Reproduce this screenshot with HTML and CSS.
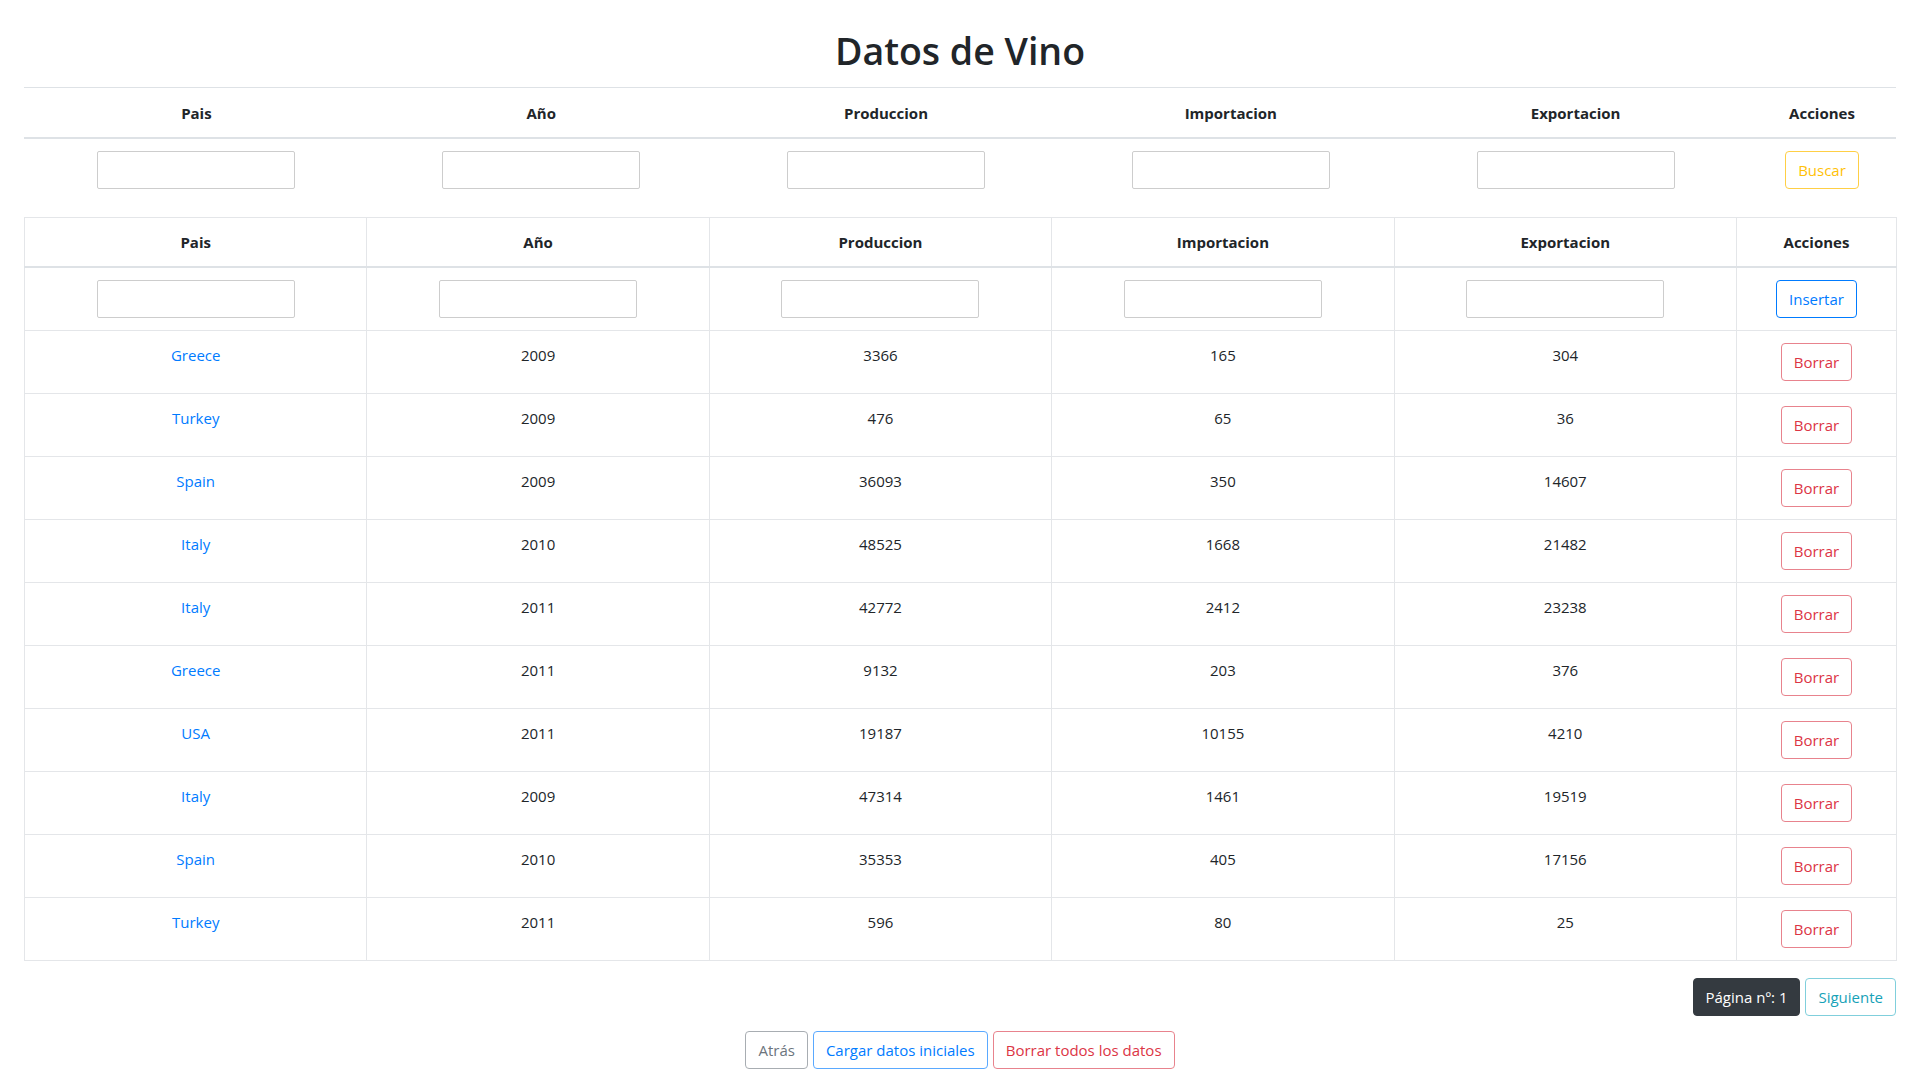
FILE: index.html
```html
<!DOCTYPE html>
<html lang="es">
<head>
<meta charset="utf-8">
<title>Datos de Vino</title>
<link rel="stylesheet" href="styles.css">
</head>
<body>
<div class="page">
  <h1 class="title">Datos de Vino</h1>

  <table class="table table-search">
    <colgroup>
      <col class="c-main"><col class="c-main"><col class="c-main"><col class="c-main"><col class="c-main"><col class="c-act-search">
    </colgroup>
    <thead>
      <tr><th>Pais</th><th>Año</th><th>Produccion</th><th>Importacion</th><th>Exportacion</th><th>Acciones</th></tr>
    </thead>
    <tbody>
      <tr>
        <td><input class="field" type="text"></td>
        <td><input class="field" type="text"></td>
        <td><input class="field" type="text"></td>
        <td><input class="field" type="text"></td>
        <td><input class="field" type="text"></td>
        <td><button class="btn btn-warning-o">Buscar</button></td>
      </tr>
    </tbody>
  </table>

  <table class="table table-bordered">
    <colgroup>
      <col class="c-data"><col class="c-data"><col class="c-data"><col class="c-data"><col class="c-data"><col class="c-act">
    </colgroup>
    <thead>
      <tr><th>Pais</th><th>Año</th><th>Produccion</th><th>Importacion</th><th>Exportacion</th><th>Acciones</th></tr>
    </thead>
    <tbody>
      <tr>
        <td><input class="field" type="text"></td>
        <td><input class="field" type="text"></td>
        <td><input class="field" type="text"></td>
        <td><input class="field" type="text"></td>
        <td><input class="field" type="text"></td>
        <td><button class="btn btn-primary-o">Insertar</button></td>
      </tr>
      <tr><td><a class="link" href="#">Greece</a></td><td>2009</td><td>3366</td><td>165</td><td>304</td><td><button class="btn btn-danger-o">Borrar</button></td></tr>
      <tr><td><a class="link" href="#">Turkey</a></td><td>2009</td><td>476</td><td>65</td><td>36</td><td><button class="btn btn-danger-o">Borrar</button></td></tr>
      <tr><td><a class="link" href="#">Spain</a></td><td>2009</td><td>36093</td><td>350</td><td>14607</td><td><button class="btn btn-danger-o">Borrar</button></td></tr>
      <tr><td><a class="link" href="#">Italy</a></td><td>2010</td><td>48525</td><td>1668</td><td>21482</td><td><button class="btn btn-danger-o">Borrar</button></td></tr>
      <tr><td><a class="link" href="#">Italy</a></td><td>2011</td><td>42772</td><td>2412</td><td>23238</td><td><button class="btn btn-danger-o">Borrar</button></td></tr>
      <tr><td><a class="link" href="#">Greece</a></td><td>2011</td><td>9132</td><td>203</td><td>376</td><td><button class="btn btn-danger-o">Borrar</button></td></tr>
      <tr><td><a class="link" href="#">USA</a></td><td>2011</td><td>19187</td><td>10155</td><td>4210</td><td><button class="btn btn-danger-o">Borrar</button></td></tr>
      <tr><td><a class="link" href="#">Italy</a></td><td>2009</td><td>47314</td><td>1461</td><td>19519</td><td><button class="btn btn-danger-o">Borrar</button></td></tr>
      <tr><td><a class="link" href="#">Spain</a></td><td>2010</td><td>35353</td><td>405</td><td>17156</td><td><button class="btn btn-danger-o">Borrar</button></td></tr>
      <tr><td><a class="link" href="#">Turkey</a></td><td>2011</td><td>596</td><td>80</td><td>25</td><td><button class="btn btn-danger-o">Borrar</button></td></tr>
    </tbody>
  </table>

  <div class="pager">
    <button class="btn btn-dark">Página nº: 1</button>
    <button class="btn btn-info-o">Siguiente</button>
  </div>

  <div class="actions">
    <button class="btn btn-secondary-o">Atrás</button>
    <button class="btn btn-primary-o btn-soft">Cargar datos iniciales</button>
    <button class="btn btn-danger-o">Borrar todos los datos</button>
  </div>
</div>
</body>
</html>
```
FILE: styles.css
```css
* { box-sizing: border-box; }

html, body {
  margin: 0;
  padding: 0;
  background: #ffffff;
}

body {
  font-family: "Open Sans", "Noto Sans", "Liberation Sans", sans-serif;
  font-size: 15px;
  line-height: 24px;
  color: #212529;
}

.page {
  padding: 28px 24px 0 24px;
}

.title {
  margin: 0 0 14px 0;
  text-align: center;
  font-size: 37.5px;
  line-height: 45px;
  font-weight: 600;
  color: #212529;
}

.table {
  width: 100%;
  table-layout: fixed;
  border-collapse: collapse;
  margin-bottom: 16px;
}

.table th,
.table td {
  padding: 12px;
  text-align: center;
  border-top: 1px solid #dee2e6;
}

.table th {
  vertical-align: bottom;
  font-weight: 700;
  border-bottom: 2px solid #dee2e6;
}

.table-search th {
  padding-top: 13px;
}

.table td {
  vertical-align: top;
}

.table tbody tr:first-child td {
  border-top: 0;
}

.c-main { width: 344.8px; }
.c-act-search { width: 148px; }
.c-data { width: 342.4px; }
.c-act { width: 160px; }

.table-bordered {
  border: 1px solid #dee2e6;
}

.table-bordered th,
.table-bordered td {
  border: 1px solid #e4e6e9;
}

.table-bordered thead th {
  border-bottom: 2px solid #dee2e6;
}

.table-bordered tbody td {
  border-top: 1px solid #ebebeb;
}

.table-bordered tbody tr:first-child td {
  border-top: 0;
}

.field {
  display: block;
  margin: 0 auto;
  width: 198px;
  height: 38px;
  border: 1px solid #cdcdcd;
  border-radius: 2px;
  background: #fff;
  font: inherit;
  padding: 0 4px;
}

.link {
  color: #007bff;
  text-decoration: none;
}

.btn {
  display: inline-block;
  font-family: inherit;
  font-size: 15px;
  line-height: 24px;
  font-weight: 400;
  padding: 6px 12px;
  border: 1px solid transparent;
  border-radius: 4px;
  background: #fff;
  cursor: pointer;
  vertical-align: middle;
}

.btn-warning-o { color: #ffc107; border-color: #ffcf45; }
.btn-primary-o { color: #007bff; border-color: #007bff; }
.btn-soft { border-color: #5aa9ff; }
.btn-danger-o { color: #dc3545; border-color: #e8838d; }
.btn-secondary-o { color: #6c757d; border-color: #a8adb2; }
.btn-info-o { color: #17a2b8; border-color: #80cfdc; }
.btn-dark { color: #fff; background: #343a40; border-color: #343a40; }

.pager {
  display: flex;
  justify-content: flex-end;
  gap: 5px;
  margin-top: 17px;
  margin-bottom: 15px;
}

.actions {
  display: flex;
  justify-content: center;
  gap: 5px;
}
```
